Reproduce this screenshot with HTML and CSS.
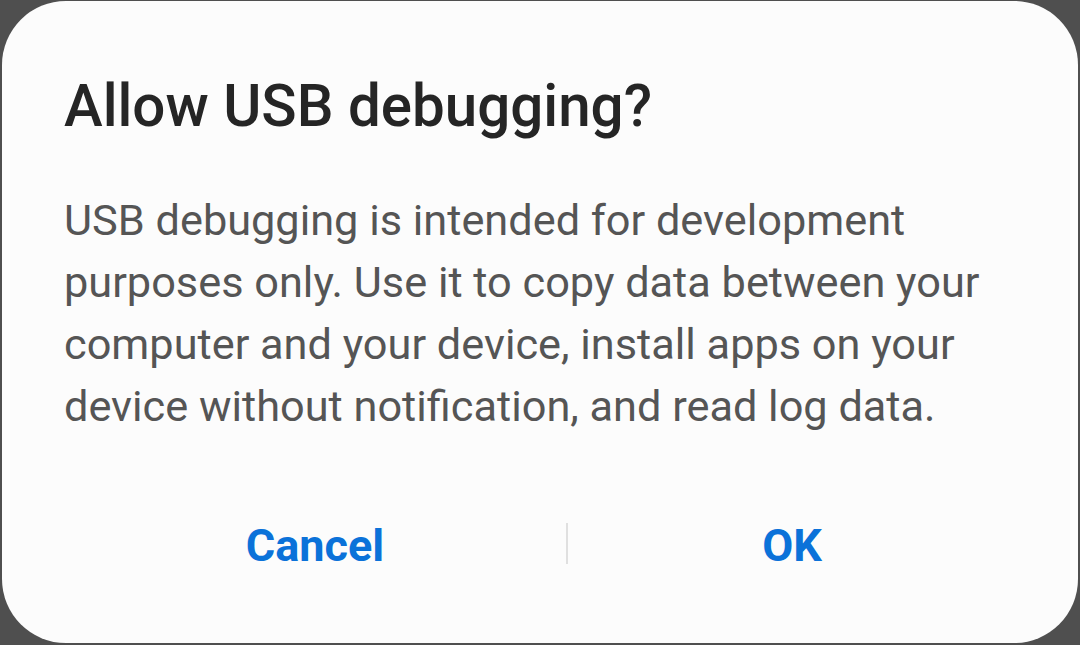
FILE: index.html
```html
<!DOCTYPE html>
<html lang="en">
<head>
    <meta charset="UTF-8">
    <meta name="viewport" content="width=device-width, initial-scale=1.0">
    <title>Allow USB debugging?</title>
    <link rel="stylesheet" href="styles.css">
</head>
<body>
    <div class="dialog">
        <h1 class="title">Allow USB debugging?</h1>
        <p class="message">USB debugging is intended for development purposes only. Use it to copy data between your computer and your device, install apps on your device without notification, and read log data.</p>
        <div class="actions">
            <button class="action">Cancel</button>
            <span class="divider"></span>
            <button class="action">OK</button>
        </div>
    </div>
</body>
</html>
```

FILE: styles.css
```css
body {
    margin: 0;
    width: 1080px;
    height: 645px;
    background-color: #4f4f4f;
    font-family: Roboto, "Liberation Sans", sans-serif;
    overflow: hidden;
}

.dialog {
    box-sizing: border-box;
    width: 1076px;
    height: 642px;
    margin: 1px 0 0 2px;
    padding: 70px 50px 0 62px;
    background-color: #fcfcfc;
    border-radius: 64px;
}

.title {
    margin: 0;
    font-size: 58.3px;
    font-weight: 500;
    line-height: 70px;
    color: #252525;
}

.message {
    margin: 48.5px 0 0 0;
    font-size: 43.3px;
    line-height: 62px;
    color: #555555;
}

.actions {
    display: grid;
    grid-template-columns: 502px 2px 448px;
    align-items: center;
    margin-top: 78px;
}

.action {
    padding: 0;
    border: none;
    background: none;
    font-family: Roboto, "Liberation Sans", sans-serif;
    font-size: 45px;
    font-weight: 700;
    line-height: 60px;
    color: #0b72d9;
    cursor: pointer;
}

.divider {
    height: 41px;
    margin-bottom: 4px;
    background-color: #e0e0e0;
}
```
